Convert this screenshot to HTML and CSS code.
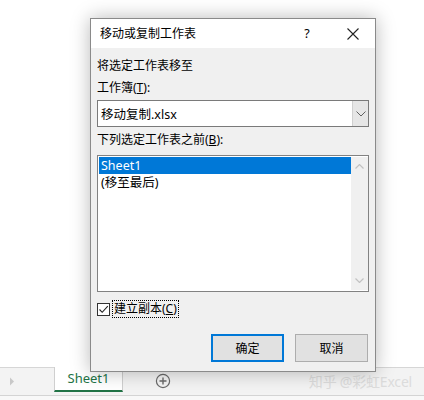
FILE: index.html
```html
<!DOCTYPE html>
<html>
<head>
<meta charset="utf-8">
<link rel="stylesheet" href="styles.css">
</head>
<body>
<div class="app">
  <div class="sheet-area"></div>
  <div class="tabbar">
    <span class="nav"><svg width="6" height="9" viewBox="0 0 6 9"><path d="M1 0.5 L5 4.5 L1 8.5 Z" fill="#c8c8c8"/></svg></span>
    <div class="tab">Sheet1</div>
    <span class="add"><svg width="16" height="16" viewBox="0 0 16 16"><circle cx="8" cy="8" r="6.6" fill="none" stroke="#6a6a6a" stroke-width="1.2"/><path d="M8 4.5 V11.5 M4.5 8 H11.5" stroke="#6a6a6a" stroke-width="1.4"/></svg></span>
    <span class="wm">知乎 @彩虹Excel</span>
  </div>
  <div class="status"></div>
</div>

<div class="dialog">
  <div class="titlebar">
    <span class="title">移动或复制工作表</span>
    <span class="help">?</span>
    <span class="close"><svg width="12" height="12" viewBox="0 0 12 12"><path d="M0.5 0.5 L11.5 11.5 M11.5 0.5 L0.5 11.5" stroke="#222" stroke-width="1.1"/></svg></span>
  </div>
  <div class="body">
    <div class="label first">将选定工作表移至</div>
    <div class="label">工作簿(<u>T</u>):</div>
    <div class="combo">
      <span class="combo-text">移动复制.xlsx</span>
      <span class="combo-btn"><svg width="10" height="6" viewBox="0 0 10 6"><path d="M0.5 0.5 L5 5 L9.5 0.5" fill="none" stroke="#606060" stroke-width="1"/></svg></span>
    </div>
    <div class="label l3">下列选定工作表之前(<u>B</u>):</div>
    <div class="list">
      <div class="items">
        <div class="item sel">Sheet1</div>
        <div class="item">(移至最后)</div>
      </div>
      <div class="scroll">
        <svg width="9" height="5" viewBox="0 0 9 5"><path d="M0.5 4.5 L4.5 0.5 L8.5 4.5" fill="none" stroke="#c2c2c2" stroke-width="1.2"/></svg>
        <svg width="9" height="5" viewBox="0 0 9 5"><path d="M0.5 0.5 L4.5 4.5 L8.5 0.5" fill="none" stroke="#c2c2c2" stroke-width="1.2"/></svg>
      </div>
    </div>
    <div class="check">
      <span class="box"><svg width="11" height="11" viewBox="0 0 11 11"><path d="M1.5 5.5 L4.2 8.3 L9.8 2.2" fill="none" stroke="#222" stroke-width="1.1"/></svg></span>
      <span class="focus">建立副本(<u>C</u>)</span>
    </div>
    <div class="buttons">
      <div class="btn primary">确定</div>
      <div class="btn">取消</div>
    </div>
  </div>
</div>
</body>
</html>
```

FILE: styles.css
```css
* { box-sizing: border-box; }
html, body {
  margin: 0;
  padding: 0;
}
body {
  width: 424px;
  height: 400px;
  overflow: hidden;
  position: relative;
  background: #ffffff;
  font-family: "Noto Sans", "Noto Sans CJK SC", sans-serif;
  font-size: 12px;
  color: #000;
}
.app {
  display: flex;
  flex-direction: column;
  height: 400px;
}
.sheet-area {
  height: 367px;
  background: #ffffff;
}
.tabbar {
  height: 28px;
  background: #f3f3f3;
  border-top: 1px solid #d6d6d6;
  display: flex;
  align-items: stretch;
}
.nav {
  width: 54px;
  display: flex;
  align-items: center;
  padding-left: 9px;
}
.tab {
  width: 69px;
  background: #ffffff;
  margin-top: -1px;
  border-left: 1px solid #cfcfcf;
  border-right: 1px solid #cfcfcf;
  border-bottom: 2px solid #217346;
  color: #217346;
  font-family: "Noto Sans", sans-serif;
  font-size: 13px;
  display: flex;
  align-items: center;
  justify-content: center;
  padding-bottom: 2px;
  margin-bottom: 3px;
}
.add {
  margin-left: 32px;
  display: flex;
  align-items: center;
  padding-bottom: 2px;
}
.wm {
  margin-left: auto;
  margin-right: 12px;
  display: flex;
  align-items: center;
  font-size: 14px;
  color: #dcdcdc;
  padding-bottom: 2px;
  letter-spacing: -0.2px;
}
.status {
  flex: 1;
  background: #f8f8f8;
  border-top: 1px solid #d4d4d4;
}

.dialog {
  position: absolute;
  left: 90px;
  top: 18px;
  width: 286px;
  height: 354px;
  background: #f0f0f0;
  border: 1px solid #8a8a8a;
  box-shadow: 0 0 18px rgba(0, 0, 0, 0.28);
  display: flex;
  flex-direction: column;
}
.titlebar {
  height: 29px;
  background: #ffffff;
  display: flex;
  align-items: center;
  padding-left: 9px;
}
.title {
  font-size: 12px;
  flex: 1;
  padding-bottom: 1px;
}
.help {
  width: 20px;
  text-align: center;
  font-size: 12.5px;
  margin-right: 30px;
  padding-bottom: 1px;
}
.close {
  width: 12px;
  margin-right: 16px;
  display: flex;
}
.body {
  padding: 0 6px 0 6px;
  display: flex;
  flex-direction: column;
}
.label {
  line-height: 16px;
  height: 16px;
  margin-top: 6px;
}
.label.first { margin-top: 10px; }
.label.l3 { margin-top: 5px; }
.combo {
  margin-top: 4px;
  height: 27px;
  background: #ffffff;
  border: 1px solid #7a7a7a;
  display: flex;
  align-items: stretch;
}
.combo-text {
  flex: 1;
  display: flex;
  align-items: center;
  padding-left: 3px;
  font-size: 12.5px;
}
.combo-btn {
  width: 16px;
  background: #e6e6e6;
  border-left: 1px solid #d0d0d0;
  display: flex;
  align-items: center;
  justify-content: center;
}
.list {
  margin-top: 7px;
  height: 137px;
  background: #ffffff;
  border: 1px solid #828282;
  display: flex;
  padding: 1px 0 1px 1px;
}
.items {
  flex: 1;
}
.item {
  height: 17px;
  line-height: 17px;
  padding-left: 2px;
  font-size: 12.5px;
}
.item.sel {
  background: #0078d7;
  color: #ffffff;
}
.scroll {
  width: 17px;
  background: #f0f0f0;
  display: flex;
  flex-direction: column;
  justify-content: space-between;
  align-items: center;
  padding: 7px 0 7px 0;
}
.check {
  margin-top: 8px;
  height: 18px;
  display: flex;
  align-items: center;
}
.box {
  width: 13px;
  height: 13px;
  border: 1px solid #333;
  background: #ffffff;
  display: flex;
  align-items: center;
  justify-content: center;
}
.focus {
  margin-left: 2px;
  border: 1px dotted #000;
  padding: 0 1px;
  line-height: 16px;
  font-size: 12px;
}
.buttons {
  margin-top: 16px;
  display: flex;
  justify-content: flex-end;
  gap: 11px;
  padding-right: 1px;
}
.btn {
  width: 73px;
  height: 28px;
  background: #e1e1e1;
  border: 1px solid #adadad;
  display: flex;
  align-items: center;
  justify-content: center;
  font-size: 12px;
}
.btn.primary {
  border: 2px solid #0078d7;
}
```
